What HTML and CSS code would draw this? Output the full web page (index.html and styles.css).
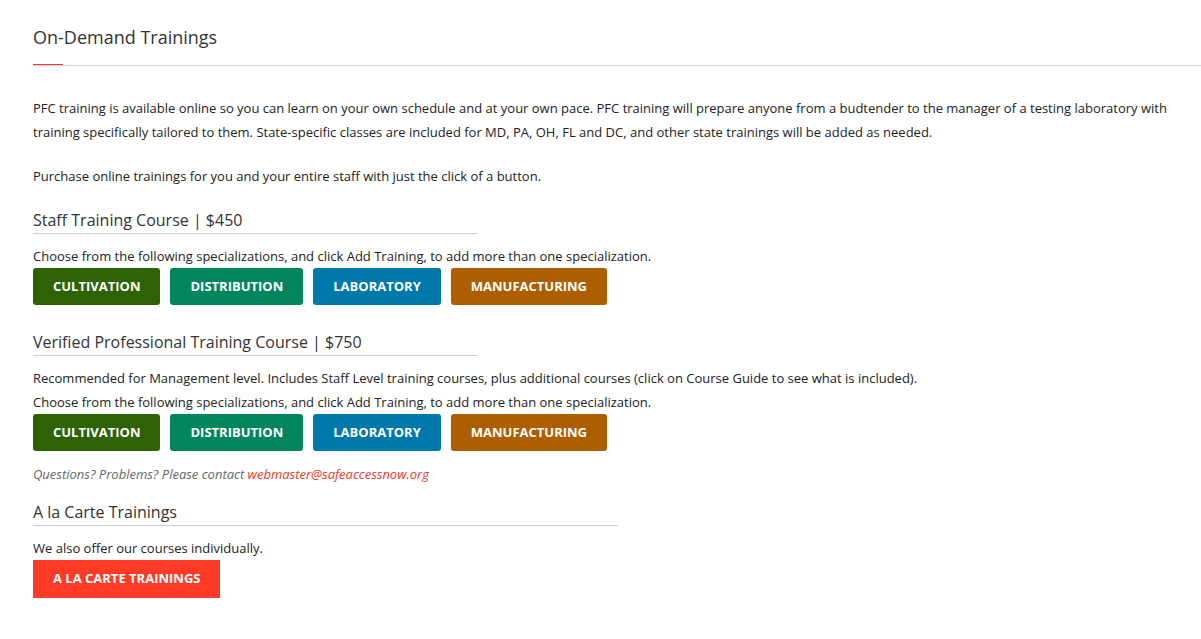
FILE: index.html
```html
<!DOCTYPE html>
<html lang="en">
<head>
    <meta charset="UTF-8">
    <meta name="viewport" content="width=device-width, initial-scale=1.0">
    <title>On-Demand Trainings</title>
    <link rel="stylesheet" href="styles.css">
</head>
<body>

<div class="page">
    <!-- Page title -->
    <div class="page-title">
        <h1>On-Demand Trainings</h1>
    </div>

    <p class="intro">PFC training is available online so you can learn on your own schedule and at your own pace. PFC training will prepare anyone from a budtender to the manager of a testing laboratory with training specifically tailored to them. State-specific classes are included for MD, PA, OH, FL and DC, and other state trainings will be added as needed.</p>

    <p class="intro">Purchase online trainings for you and your entire staff with just the click of a button.</p>

    <!-- Staff course -->
    <div class="course course-staff">
        <h2>Staff Training Course | $450</h2>
        <p>Choose from the following specializations, and click Add Training, to add more than one specialization.</p>
        <div class="btn-row">
            <a href="#" class="btn btn-cultivation">Cultivation</a>
            <a href="#" class="btn btn-distribution">Distribution</a>
            <a href="#" class="btn btn-laboratory">Laboratory</a>
            <a href="#" class="btn btn-manufacturing">Manufacturing</a>
        </div>
    </div>

    <!-- Verified professional course -->
    <div class="course course-pro">
        <h2>Verified Professional Training Course | $750</h2>
        <p>Recommended for Management level. Includes Staff Level training courses, plus additional courses (click on Course Guide to see what is included).</p>
        <p>Choose from the following specializations, and click Add Training, to add more than one specialization.</p>
        <div class="btn-row">
            <a href="#" class="btn btn-cultivation">Cultivation</a>
            <a href="#" class="btn btn-distribution">Distribution</a>
            <a href="#" class="btn btn-laboratory">Laboratory</a>
            <a href="#" class="btn btn-manufacturing">Manufacturing</a>
        </div>
    </div>

    <p class="contact">Questions? Problems? Please contact <a href="mailto:webmaster@safeaccessnow.org">webmaster@safeaccessnow.org</a></p>

    <!-- A la carte -->
    <div class="course course-carte">
        <h2>A la Carte Trainings</h2>
        <p>We also offer our courses individually.</p>
        <a href="#" class="btn btn-carte">A la Carte Trainings</a>
    </div>
</div>

</body>
</html>
```

FILE: styles.css
```css
body {
    margin: 0;
    font-family: "Open Sans", Arial, sans-serif;
    font-size: 13px;
    color: #222;
    background-color: #ffffff;
}

.page {
    padding: 25px 0 40px 33px;
}

/* Title with the short red accent on the rule */
.page-title {
    padding-bottom: 16px;
    border-bottom: 1px solid #d4d4d4;
    background: linear-gradient(#f0392b, #f0392b) left bottom / 30px 1px no-repeat;
    margin-bottom: 30px;
}

.page-title h1 {
    margin: 0;
    font-size: 18px;
    font-weight: 400;
    line-height: 24px;
    color: #333;
}

p {
    margin: 0;
    line-height: 24px;
}

.intro {
    padding-right: 32px;
    margin-bottom: 20px;
}

/* Course blocks */
.course h2 {
    margin: 0 0 10px 0;
    font-size: 16px;
    font-weight: 400;
    line-height: 22px;
    color: #333;
    padding-bottom: 2px;
    border-bottom: 1px solid #cfcfcf;
}

.course-staff {
    margin-top: 21px;
}

.course-staff h2,
.course-pro h2 {
    width: 444px;
}

.course-pro {
    margin-top: 26px;
}

.course-carte {
    margin-top: 15px;
}

.course-carte h2 {
    width: 585px;
}

.btn-row {
    display: flex;
    gap: 10px;
}

.btn {
    display: inline-block;
    padding: 10px 20px;
    line-height: 17px;
    font-size: 13px;
    font-weight: 700;
    text-transform: uppercase;
    text-decoration: none;
    color: #fff;
    border-radius: 3px;
}

.btn-cultivation {
    background-color: #2d6205;
}

.btn-distribution {
    background-color: #02855c;
}

.btn-laboratory {
    background-color: #0078aa;
}

.btn-manufacturing {
    background-color: #ac5e00;
}

.btn-carte {
    background-color: #ff3b27;
    border-radius: 0;
    padding: 10px 20px 11px;
}

.contact {
    margin-top: 11px;
    font-style: italic;
    color: #666;
}

.contact a {
    color: #f0392b;
    text-decoration: none;
}
```
